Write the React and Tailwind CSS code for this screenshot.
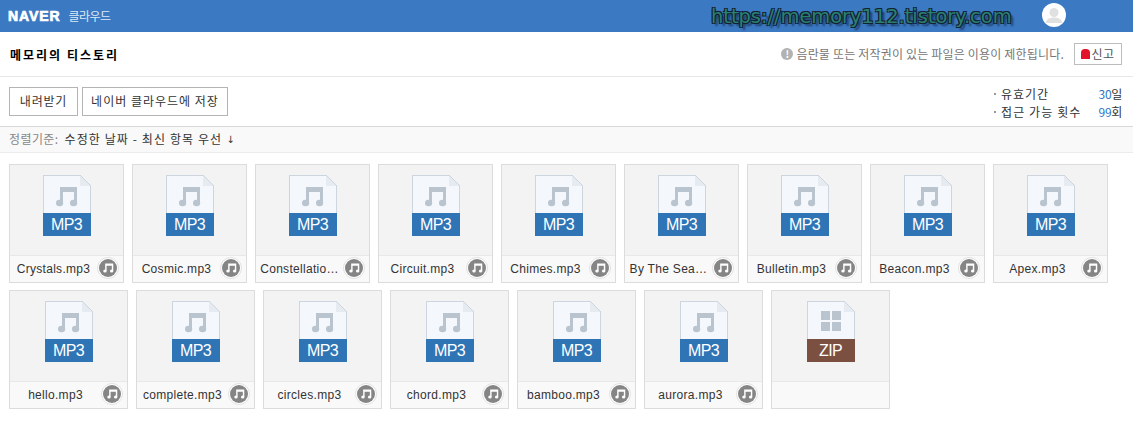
const kr = "font-['Noto_Sans_CJK_KR','Liberation_Sans',sans-serif]";

function Note({ className = "" }) {
  return (
    <svg viewBox="0 0 22 21" className={className} fill="currentColor">
      <path d="M4 1h17v15.5h-3V6H7v10.5H4z" />
      <ellipse cx="3.6" cy="17" rx="3.6" ry="3.2" />
      <ellipse cx="17.6" cy="17" rx="3.6" ry="3.2" />
    </svg>
  );
}

function FileIcon({ type }) {
  const zip = type === "ZIP";
  return (
    <div className="relative w-[48px] h-[61px] flex flex-col">
      <div className="relative h-[38px] bg-[#f4f7fb] border-t border-l border-r border-[#cdd5de] flex items-center justify-center">
        <svg viewBox="0 0 11 11" className="absolute right-[-1px] top-[-1px] w-[11px] h-[11px]">
          <path d="M0 0h11v11z" fill="#f3f3f3" />
          <path d="M0 0v11h11z" fill="#e6ebf1" />
          <path d="M0 0l11 11" stroke="#cdd5de" fill="none" />
        </svg>
        {zip ? (
          <div className="grid grid-cols-2 gap-[2px] mt-[1px]">
            <div className="w-[9px] h-[9px] bg-[#b9c4cf]" />
            <div className="w-[9px] h-[9px] bg-[#b9c4cf]" />
            <div className="w-[9px] h-[9px] bg-[#b9c4cf]" />
            <div className="w-[9px] h-[9px] bg-[#b9c4cf]" />
          </div>
        ) : (
          <Note className="w-[22px] h-[21px] text-[#b9c4cf] mt-[3px]" />
        )}
      </div>
      <div className={`h-[23px] flex items-center justify-center text-white text-[16px] tracking-[-0.7px] leading-none font-['Liberation_Sans',sans-serif] ${zip ? "bg-[#7c5040]" : "bg-[#2f75b5]"}`}>
        {type}
      </div>
    </div>
  );
}

function Card({ name, width, type = "MP3" }) {
  return (
    <div className={`${width} h-[119px] shrink-0 border border-[#dcdcdc] bg-[#f3f3f3] flex flex-col`}>
      <div className="h-[90px] flex justify-center pt-[10px]">
        <FileIcon type={type} />
      </div>
      <div className="h-[27px] bg-[#f9f9f9] border-t border-[#e8e8e8] flex items-center relative pl-[2px] pr-[28px]">
        {name && (
          <span className="flex-1 whitespace-nowrap text-center text-[12px] leading-[24px] tracking-[0.3px] text-[#333] font-['Liberation_Sans',sans-serif]">{name}</span>
        )}
        {name && (
          <span className="absolute right-[4px] top-[1px] w-[22px] h-[22px] rounded-full bg-white border border-[#e2e2e2] flex items-center justify-center">
            <span className="w-[18px] h-[18px] rounded-full bg-[#858585] flex items-center justify-center">
              <Note className="w-[11px] h-[10px] text-white" />
            </span>
          </span>
        )}
      </div>
    </div>
  );
}

const row1 = ["Crystals.mp3", "Cosmic.mp3", "Constellatio…", "Circuit.mp3", "Chimes.mp3", "By The Sea…", "Bulletin.mp3", "Beacon.mp3", "Apex.mp3"];
const row2 = ["hello.mp3", "complete.mp3", "circles.mp3", "chord.mp3", "bamboo.mp3", "aurora.mp3"];

export default function App() {
  return (
    <div className={`w-[1133px] h-[426px] overflow-hidden bg-white ${kr}`}>
      <header className="h-[32px] bg-[#3c79c3] flex items-center relative pl-[8px]">
        <span className="font-['Liberation_Sans',sans-serif] font-black text-[14px] tracking-[0.9px] text-white [-webkit-text-stroke:0.7px_white]">NAVER</span>
        <span className="ml-[8px] text-[12px] tracking-[-0.5px] text-[#dfe9f5]">클라우드</span>
        <span className="absolute left-[711px] top-[3px] text-[19.4px] leading-[28px] font-['DejaVu_Sans',sans-serif] text-[#2a8070] [text-shadow:1px_1px_0_#123,-1px_-1px_0_#123,1px_-1px_0_#123,-1px_1px_0_#123,3px_3px_2px_#1b3a60]">
          https://memory112.tistory.com
        </span>
        <span className="absolute left-[1042px] top-[3px] w-[24px] h-[24px] rounded-full bg-white flex items-center justify-center overflow-hidden">
          <svg viewBox="0 0 24 24" className="w-[24px] h-[24px]" fill="#e0e0e0">
            <circle cx="12" cy="9.5" r="4.5" />
            <path d="M4 20c0-4 4-5.5 8-5.5s8 1.5 8 5.5z" />
          </svg>
        </span>
      </header>

      <div className="h-[45px] border-b border-[#e8e8e8] flex items-center justify-between pl-[10px] pr-[11px]">
        <strong className="text-[12px] leading-[22px] pt-[1px] tracking-[2px] text-black font-bold">메모리의 티스토리</strong>
        <div className="flex items-center">
          <span className="w-[12px] h-[12px] rounded-full bg-[#b2b2b2] text-white text-[10px] font-bold leading-[12px] text-center">!</span>
          <span className="ml-[3px] text-[12px] tracking-[0.18px] text-[#777]">음란물 또는 저작권이 있는 파일은 이용이 제한됩니다.</span>
          <button className="ml-[10px] w-[48px] h-[22px] border border-[#bdbdbd] flex items-center justify-center text-[12px] tracking-[0.5px] text-[#555]">
            <span className="w-[9px] h-[10px] bg-[#e3132a] rounded-t-[4px] mr-[1px]" />
            신고
          </button>
        </div>
      </div>

      <div className="h-[50px] border-b border-[#d8d8d8] flex items-center justify-between pl-[9px] pr-[11px]">
        <div className="flex gap-[4px] mb-[1px]">
          <button className="w-[69px] h-[29px] border border-[#b4b4b4] text-[12px] tracking-[0.8px] text-[#333]">내려받기</button>
          <button className="w-[146px] h-[29px] border border-[#b4b4b4] text-[12px] tracking-[1px] text-[#333]">네이버 클라우드에 저장</button>
        </div>
        <div className="w-[128px] pt-[3px] text-[12px] leading-[18px] text-[#333]">
          <div className="flex justify-between">
            <span className="flex items-center tracking-[1px]"><span className="w-[2px] h-[2px] bg-[#999] mr-[5px]" />유효기간</span>
            <span className="tracking-[-0.3px]"><span className="text-[#2f75c5]">30</span>일</span>
          </div>
          <div className="flex justify-between">
            <span className="flex items-center tracking-[1.1px]"><span className="w-[2px] h-[2px] bg-[#999] mr-[5px]" />접근 가능 횟수</span>
            <span className="tracking-[-0.3px]"><span className="text-[#2f75c5]">99</span>회</span>
          </div>
        </div>
      </div>

      <div className="h-[26px] bg-[#f9f9f9] border-b border-[#ececec] flex items-center pl-[9px] pb-[1px] text-[12px]">
        <span className="text-[#888] tracking-[0.4px]">정렬기준:</span>
        <span className="ml-[6px] text-[#333] tracking-[1.1px]">수정한 날짜 - 최신 항목 우선</span>
        <span className="ml-[4px] text-[10px] text-[#333] font-['DejaVu_Sans',sans-serif]">↓</span>
      </div>

      <div className="pt-[11px] pl-[9px] flex flex-col gap-[7px]">
        <div className="flex gap-[8px]">
          {row1.map((n) => <Card key={n} name={n} width="w-[115px]" />)}
        </div>
        <div className="flex gap-[8px]">
          {row2.map((n) => <Card key={n} name={n} width="w-[119px]" />)}
          <Card name="" width="w-[119px]" type="ZIP" />
        </div>
      </div>
    </div>
  );
}
